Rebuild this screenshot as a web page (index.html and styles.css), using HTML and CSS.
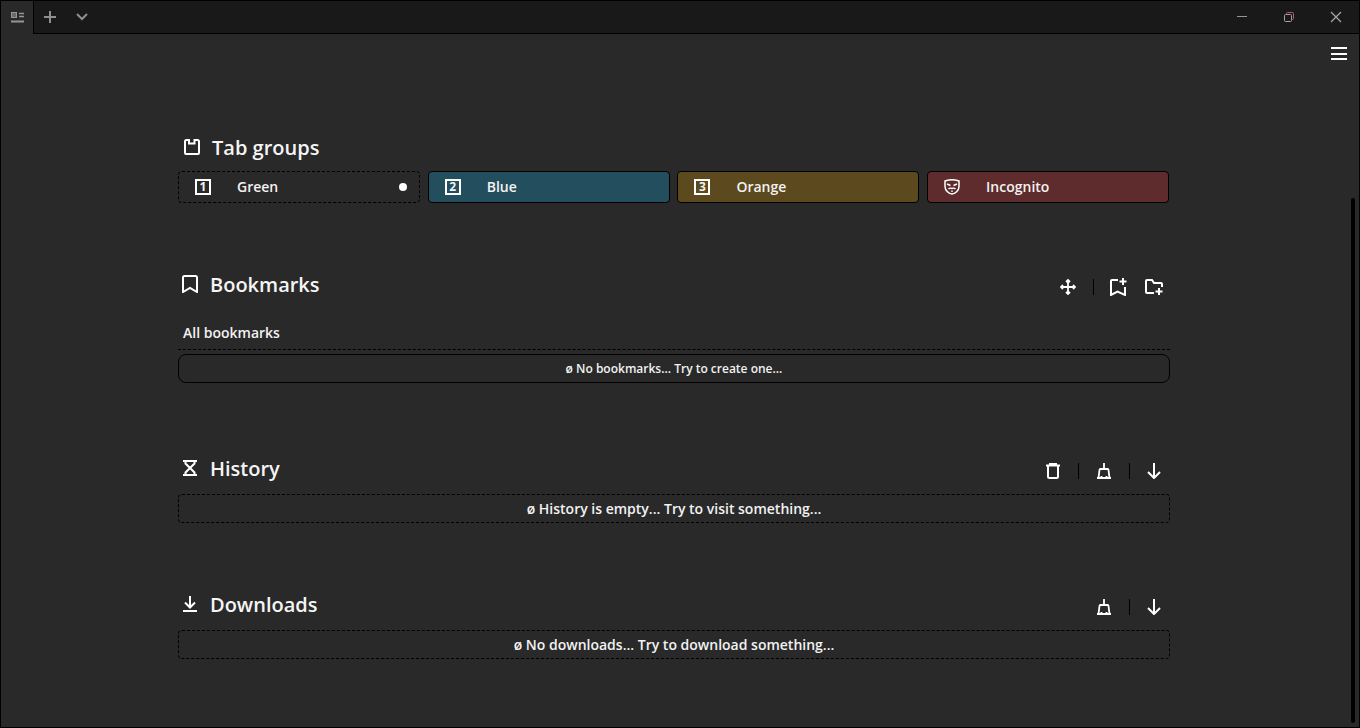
FILE: index.html
```html
<!DOCTYPE html>
<html lang="en">
<head>
    <meta charset="UTF-8">
    <title>Start page</title>
    <link rel="stylesheet" href="styles.css">
</head>
<body>
    <div class="window">
        <header class="titlebar">
            <div class="tab-switch">
                <svg width="13" height="11" viewBox="0 0 13 11" fill="none" stroke="#969696" stroke-width="1"><rect x="0.500" y="0.500" width="5" height="5" fill="#6a6a6a"/><path d="M8 1.500h5M8 4.500h5" stroke-width="1.400"/><path d="M0 9.500h13" stroke-width="2"/></svg>
            </div>
            <button class="bar-btn bar-plus">
                <svg width="14" height="14" viewBox="0 0 14 14" stroke="#8f8f8f" stroke-width="2" fill="none"><path d="M7 1v12M1 7h12"/></svg>
            </button>
            <button class="bar-btn bar-chevron">
                <svg width="14" height="10" viewBox="0 0 14 10" stroke="#8f8f8f" stroke-width="2" fill="none"><path d="M2 2l5 5 5-5"/></svg>
            </button>
            <div class="window-controls">
                <button class="win-btn"><svg width="12" height="12" viewBox="0 0 12 12" stroke="#969696" fill="none"><path d="M1 5.500h10"/></svg></button>
                <button class="win-btn"><svg width="12" height="12" viewBox="0 0 12 12" stroke="#a4a4a4" fill="none"><rect x="1.500" y="3.500" width="7" height="7" rx="1"/><path d="M3.500 3.500v-1a1 1 0 0 1 1-1h5a1 1 0 0 1 1 1v5a1 1 0 0 1-1 1h-1" stroke="#b0606a"/></svg></button>
                <button class="win-btn"><svg width="12" height="12" viewBox="0 0 12 12" stroke="#a8a8a8" stroke-width="1.200" fill="none"><path d="M1 1l10 10M11 1L1 11"/></svg></button>
            </div>
        </header>

        <button class="menu-btn"><span></span><span></span><span></span></button>
        <div class="scrollbar"></div>

        <main class="content">
            <section class="tab-groups">
                <div class="section-head">
                    <h2 class="title title-tabs">
                        <svg width="16" height="16" viewBox="0 0 16 16" fill="none" stroke="#fff" stroke-width="2"><path d="M1 2.500A1.500 1.500 0 0 1 2.500 1H5v3.500h5.500V1h3A1.500 1.500 0 0 1 15 2.500V14a1 1 0 0 1-1 1H2a1 1 0 0 1-1-1z"/></svg>
                        Tab groups
                    </h2>
                </div>
                <div class="group-row">
                    <div class="group group-green">
                        <span class="group-key">1</span>
                        <span class="group-name">Green</span>
                        <span class="group-dot"></span>
                    </div>
                    <div class="group group-blue">
                        <span class="group-key">2</span>
                        <span class="group-name">Blue</span>
                    </div>
                    <div class="group group-orange">
                        <span class="group-key">3</span>
                        <span class="group-name">Orange</span>
                    </div>
                    <div class="group group-red">
                        <svg class="mask" width="16" height="16" viewBox="0 0 16 16" fill="none" stroke="#fff" stroke-width="1.500"><path d="M1 2c4-1.500 10-1.500 14 0v5.500c0 4-4 7.500-7 7.500s-7-3.500-7-7.500z"/><path d="M3 5l3.500 1.500M13 5L9.500 6.500M4.500 10c1.500-1.500 2.500-1 3.500-.5 1-.5 2-1 3.500.5M8 11.500v1.500" stroke-width="1.400"/></svg>
                        <span class="group-name">Incognito</span>
                    </div>
                </div>
            </section>

            <section class="bookmarks">
                <div class="section-head">
                    <h2 class="title">
                        <svg width="16" height="18" viewBox="0 0 16 18" fill="none" stroke="#fff" stroke-width="2"><path d="M1 17V2.500A1.500 1.500 0 0 1 2.500 1h11A1.500 1.500 0 0 1 15 2.500V17l-7-4z"/></svg>
                        Bookmarks
                    </h2>
                    <div class="actions">
                        <button class="icon-btn"><svg width="16" height="16" viewBox="0 0 16 16" fill="none" stroke="#fff" stroke-width="1.800"><path d="M8 1v14M1 8h14M6 3l2-2 2 2M6 13l2 2 2-2M3 6L1 8l2 2M13 6l2 2-2 2"/></svg></button>
                        <span class="divider"></span>
                        <button class="icon-btn"><svg width="18" height="18" viewBox="0 0 18 18" fill="none" stroke="#fff" stroke-width="2"><path d="M9 2H3a1 1 0 0 0-1 1v14l6.500-3.500L16 17V9"/><path d="M14 0v7M10.500 3.500h7"/></svg></button>
                        <button class="icon-btn"><svg width="18" height="18" viewBox="0 0 18 18" fill="none" stroke="#fff" stroke-width="2"><path d="M9 15H2a1 1 0 0 1-1-1V3a1 1 0 0 1 1-1h5l2 3h7a1 1 0 0 1 1 1v3"/><path d="M14 10v7M10.500 13.500h7"/></svg></button>
                    </div>
                </div>
                <div class="folder-label">All bookmarks</div>
                <div class="empty empty-solid">&#248; No bookmarks... Try to create one...</div>
            </section>

            <section class="history">
                <div class="section-head">
                    <h2 class="title">
                        <svg width="16" height="16" viewBox="0 0 16 16" fill="none" stroke="#fff" stroke-width="2"><path d="M1 1h14M1 15h14M3.500 1v2.500L8 8l4.500-4.500V1M3.500 15v-2.500L8 8l4.500 4.500V15"/></svg>
                        History
                    </h2>
                    <div class="actions">
                        <button class="icon-btn"><svg width="14" height="16" viewBox="0 0 14 16" fill="none" stroke="#fff" stroke-width="2"><path d="M3 .500h8M0 2.500h14M2 2.500V13.500a1.500 1.500 0 0 0 1.500 1.500h7a1.500 1.500 0 0 0 1.500-1.500V2.500"/></svg></button>
                        <span class="divider"></span>
                        <button class="icon-btn"><svg width="14" height="16" viewBox="0 0 14 16" fill="none" stroke="#fff" stroke-width="1.800"><path d="M7 0v5M1.500 15l1-8a1 1 0 0 1 1-1h7a1 1 0 0 1 1 1l1 8zM0 15h14M4.500 15v-2M9.500 15v-2"/></svg></button>
                        <span class="divider"></span>
                        <button class="icon-btn"><svg width="14" height="16" viewBox="0 0 14 16" fill="none" stroke="#fff" stroke-width="2"><path d="M7 0v15M1 9l6 6 6-6"/></svg></button>
                    </div>
                </div>
                <div class="empty">&#248; History is empty... Try to visit something...</div>
            </section>

            <section class="downloads">
                <div class="section-head">
                    <h2 class="title">
                        <svg width="16" height="16" viewBox="0 0 16 16" fill="none" stroke="#fff" stroke-width="2"><path d="M8 0v11M3 6.500l5 5 5-5M1 15h14"/></svg>
                        Downloads
                    </h2>
                    <div class="actions">
                        <button class="icon-btn"><svg width="14" height="16" viewBox="0 0 14 16" fill="none" stroke="#fff" stroke-width="1.800"><path d="M7 0v5M1.500 15l1-8a1 1 0 0 1 1-1h7a1 1 0 0 1 1 1l1 8zM0 15h14M4.500 15v-2M9.500 15v-2"/></svg></button>
                        <span class="divider"></span>
                        <button class="icon-btn"><svg width="14" height="16" viewBox="0 0 14 16" fill="none" stroke="#fff" stroke-width="2"><path d="M7 0v15M1 9l6 6 6-6"/></svg></button>
                    </div>
                </div>
                <div class="empty">&#248; No downloads... Try to download something...</div>
            </section>
        </main>
    </div>
</body>
</html>
```

FILE: styles.css
```css
* {
    box-sizing: border-box;
}
html, body {
    height: 100%;
}
body {
    margin: 0;
    font-family: "Open Sans", "Noto Sans", sans-serif;
    background: #292929;
    color: #f2f2f2;
    overflow: hidden;
}
button {
    background: none;
    border: none;
    padding: 0;
    display: flex;
    align-items: center;
    justify-content: center;
}
.window {
    position: relative;
    height: 728px;
    border: 1px solid #000;
    overflow: hidden;
}
.titlebar {
    display: flex;
    align-items: stretch;
    height: 33px;
    background: #191919;
    border-bottom: 1px solid #000;
}
.tab-switch {
    width: 33px;
    margin-bottom: -1px;
    background: #292929;
    border-right: 1px solid #000;
    display: flex;
    align-items: center;
    justify-content: center;
}
.bar-btn {
    width: 32px;
}
.window-controls {
    margin-left: auto;
    display: flex;
}
.win-btn {
    width: 47px;
}
.menu-btn {
    position: absolute;
    top: 46px;
    right: 12px;
    width: 16px;
    height: 13px;
    flex-direction: column;
    justify-content: space-between;
}
.menu-btn span {
    display: block;
    width: 100%;
    height: 2px;
    background: #fff;
}
.scrollbar {
    position: absolute;
    top: 197px;
    right: 4px;
    width: 4px;
    height: 525px;
    background: #000;
    border-radius: 2px;
}
.content {
    width: 992px;
    margin-left: 177px;
    padding-top: 95px;
}
.section-head {
    display: flex;
    align-items: center;
    justify-content: space-between;
    height: 36px;
}
.title {
    display: flex;
    align-items: center;
    gap: 12px;
    margin: 0;
    font-size: 20px;
    font-weight: 600;
    color: #f5f5f5;
    padding-left: 4px;
}
.title-tabs {
    padding-left: 6px;
}
.group-row {
    display: grid;
    grid-template-columns: repeat(4, 1fr);
    gap: 7.750px;
    width: 991px;
    margin-top: 6px;
}
.group {
    display: flex;
    align-items: center;
    height: 32px;
    padding-left: 16px;
    border: 1px solid #000;
    border-radius: 4px;
    font-size: 14px;
    font-weight: 600;
}
.group-green {
    border: 1px dashed #000;
}
.group-blue {
    background: #234e5e;
}
.group-orange {
    background: #5c4a1e;
}
.group-red {
    background: #5e2c2c;
}
.group-key {
    width: 16px;
    height: 16px;
    border: 2px solid #fff;
    font-size: 12px;
    line-height: 12px;
    text-align: center;
    font-weight: 700;
}
.mask {
    flex: none;
}
.group-name {
    margin-left: 26px;
    padding-bottom: 2px;
}
.group-dot {
    width: 8px;
    height: 8px;
    margin-left: auto;
    margin-right: 12px;
    border-radius: 50%;
    background: #fff;
}
.bookmarks {
    margin-top: 63px;
}
.actions {
    display: flex;
    align-items: center;
    padding-right: 7px;
    margin-top: 6px;
}
.icon-btn {
    width: 18px;
    height: 18px;
    margin-left: 18px;
}
.divider {
    width: 1px;
    height: 16px;
    margin-left: 16px;
    background: #000;
}
.divider + .icon-btn {
    margin-left: 16px;
}
.divider + .icon-btn:last-child,
.bookmarks .divider + .icon-btn {
    margin-left: 15px;
}
.folder-label {
    margin-top: 20px;
    padding: 0 5px 5px;
    border-bottom: 1px dashed #000;
    font-size: 14px;
    font-weight: 600;
    line-height: 22px;
}
.empty {
    display: flex;
    align-items: center;
    justify-content: center;
    height: 29px;
    margin-top: 8px;
    border: 1px dashed #000;
    border-radius: 4px;
    font-size: 14px;
    font-weight: 600;
}
.empty-solid {
    margin-top: 4px;
    border: 1px solid #000;
    border-radius: 8px;
    font-size: 12px;
}
.history {
    margin-top: 67px;
}
.downloads {
    margin-top: 63px;
}
```
